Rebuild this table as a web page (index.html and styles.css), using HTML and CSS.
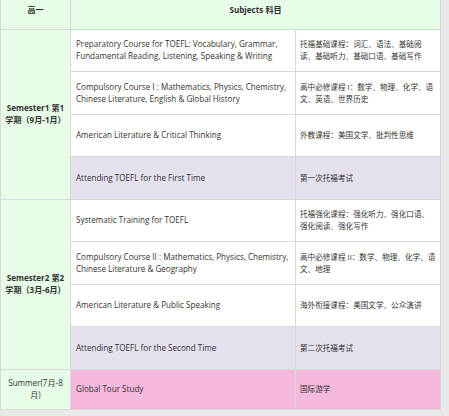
FILE: index.html
```html
<!DOCTYPE html>
<html lang="zh">
<head>
<meta charset="utf-8">
<link rel="stylesheet" href="styles.css">
</head>
<body>
<table class="plan">
  <colgroup>
    <col class="c1"><col class="c2"><col class="c3">
  </colgroup>
  <thead>
    <tr class="head">
      <th>高一</th>
      <th colspan="2">Subjects 科目</th>
    </tr>
  </thead>
  <tbody>
    <tr>
      <td class="term" rowspan="4"><b>Semester1 第1<br>学期（9月-1月）</b></td>
      <td>Preparatory Course for TOEFL: Vocabulary, Grammar, Fundamental Reading, Listening, Speaking &amp; Writing</td>
      <td class="zh">托福基础课程：词汇、语法、基础阅读、基础听力、基础口语、基础写作</td>
    </tr>
    <tr>
      <td>Compulsory Course I : Mathematics, Physics, Chemistry, Chinese Literature, English &amp; Global History</td>
      <td class="zh">高中必修课程 I：数学、物理、化学、语文、英语、世界历史</td>
    </tr>
    <tr>
      <td>American Literature &amp; Critical Thinking</td>
      <td class="zh">外教课程：美国文学、批判性思维</td>
    </tr>
    <tr class="exam">
      <td>Attending TOEFL for the First Time</td>
      <td class="zh">第一次托福考试</td>
    </tr>
    <tr>
      <td class="term" rowspan="4"><b>Semester2 第2<br>学期（3月-6月）</b></td>
      <td>Systematic Training for TOEFL</td>
      <td class="zh">托福强化课程：强化听力、强化口语、强化阅读、强化写作</td>
    </tr>
    <tr>
      <td>Compulsory Course II : Mathematics, Physics, Chemistry, Chinese Literature &amp; Geography</td>
      <td class="zh">高中必修课程 II：数学、物理、化学、语文、地理</td>
    </tr>
    <tr>
      <td>American Literature &amp; Public Speaking</td>
      <td class="zh">海外衔接课程：美国文学、公众演讲</td>
    </tr>
    <tr class="exam">
      <td>Attending TOEFL for the Second Time</td>
      <td class="zh">第二次托福考试</td>
    </tr>
    <tr class="summer">
      <td class="term">Summer(7月-8<br>月)</td>
      <td class="tour">Global Tour Study</td>
      <td class="tour zh">国际游学</td>
    </tr>
  </tbody>
</table>
</body>
</html>
```

FILE: styles.css
```css
html, body {
  margin: 0;
  padding: 0;
  background: #e9e9e9;
}

.plan {
  border-collapse: collapse;
  table-layout: fixed;
  width: 440px;
  font-family: "Open Sans", "Noto Sans CJK SC", sans-serif;
  font-size: 8.1px;
  line-height: 12px;
  color: #333333;
  background: #ffffff;
}

.c1 { width: 70px; }
.c2 { width: 225px; }
.c3 { width: 145px; }

.plan th,
.plan td {
  border: 1px solid #d9d9d9;
  padding: 0 3px 0 5px;
  vertical-align: middle;
  text-align: left;
  word-wrap: break-word;
}

.plan td.zh {
  padding: 0 4px;
  font-size: 7.6px;
}

.head {
  height: 29px;
}

.head th {
  background: #e8fde8;
  font-weight: bold;
  text-align: center;
  padding: 0 5px 8px;
  border-top: 0;
  border-bottom-color: #cfdccf;
}

.plan tbody tr {
  height: 42.5px;
}

.plan tbody tr.summer {
  height: 40px;
}

.plan td.term {
  background: #e8fde8;
  text-align: center;
  padding: 0 2px;
}

.exam td {
  background: #e4e0ed;
}

.plan td.tour {
  background: #f6b9de;
}
```
